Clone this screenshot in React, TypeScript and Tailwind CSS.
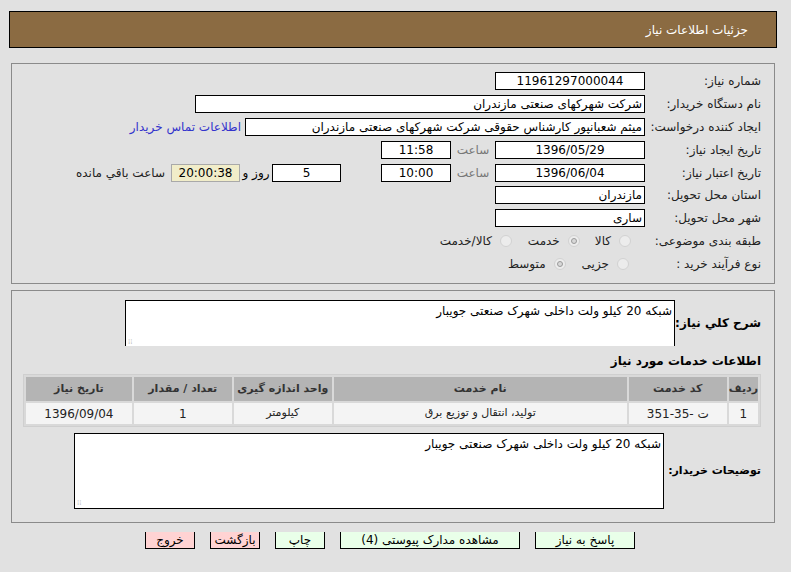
import React from 'react';

const Box = ({ w, children, center = true, bg = 'bg-white' }: { w: string; children?: React.ReactNode; center?: boolean; bg?: string }) => (
  <div className={`${w} h-[18px] border border-black ${bg} flex items-center px-[2px] ${center ? 'justify-center' : 'justify-start'} text-[12px] whitespace-nowrap overflow-hidden`}>
    {children}
  </div>
);

const Radio = ({ checked = false }: { checked?: boolean }) => (
  <span className="w-[12px] h-[12px] rounded-full border border-[#d2d2d2] bg-[#ececec] flex items-center justify-center">
    {checked && <span className="w-[6px] h-[6px] rounded-full border border-[#9a9a9a] bg-[#d8d8d8]" />}
  </span>
);

function Row({ label, children }: { label: string; children?: React.ReactNode }) {
  return (
    <div className="flex items-center h-[22.8px]">
      <div className="w-[116px] shrink-0 whitespace-nowrap text-[12px] text-[#222]">{label}</div>
      <div className="flex items-center">{children}</div>
    </div>
  );
}

export default function App() {
  return (
    <div dir="rtl" className="w-[791px] h-[572px] bg-[#e1e1e1] pt-[11px] pl-[9px] pr-[14px] font-['Tahoma','DejaVu_Sans',sans-serif] text-black">
      <div className="h-[37px] bg-[#8b6b42] border border-black flex items-center pr-[28px]">
        <span className="text-white text-[12px]">جزئیات اطلاعات نیاز</span>
      </div>

      {/* main info */}
      <div className="mt-[15px] mx-[2px] border border-[#8a8a8a] pt-[6px] pb-[8px] pr-[13px]">
        <Row label="شماره نیاز:">
          <Box w="w-[150px]">11961297000044</Box>
        </Row>
        <Row label="نام دستگاه خریدار:">
          <Box w="w-[450px]" center={false}>شرکت شهرکهای صنعتی مازندران</Box>
        </Row>
        <Row label="ایجاد کننده درخواست:">
          <Box w="w-[400px]" center={false}>میثم شعبانپور کارشناس حقوقی شرکت شهرکهای صنعتی مازندران</Box>
          <span className="mr-[4px] text-[12px] text-[#3333cc]">اطلاعات تماس خریدار</span>
        </Row>
        <Row label="تاریخ ایجاد نیاز:">
          <Box w="w-[150px]">1396/05/29</Box>
          <span className="w-[44px] text-center text-[12px] text-[#777]">ساعت</span>
          <Box w="w-[70px]">11:58</Box>
        </Row>
        <Row label="تاریخ اعتبار نیاز:">
          <Box w="w-[150px]">1396/06/04</Box>
          <span className="w-[44px] text-center text-[12px] text-[#777]">ساعت</span>
          <Box w="w-[70px]">10:00</Box>
          <span className="w-[40px]" />
          <Box w="w-[69px]">5</Box>
          <span className="w-[32px] text-center text-[12px]">روز و</span>
          <div className="w-[69px] h-[18px] border border-[#a9a9a9] bg-[#f1edc9] flex items-center justify-center text-[12px]">20:00:38</div>
          <span className="mr-[6px] text-[12px] text-[#222]">ساعت باقي مانده</span>
        </Row>
        <Row label="استان محل تحویل:">
          <Box w="w-[150px]" center={false}>مازندران</Box>
        </Row>
        <Row label="شهر محل تحویل:">
          <Box w="w-[150px]" center={false}>ساری</Box>
        </Row>
        <Row label="طبقه بندی موضوعی:">
          <div className="flex items-center text-[12px] text-[#222]">
            <span className="mr-[14px]"><Radio /></span>
            <span className="mr-[8px]">کالا</span>
            <span className="mr-[15px]"><Radio checked /></span>
            <span className="mr-[8px]">خدمت</span>
            <span className="mr-[16px]"><Radio /></span>
            <span className="mr-[8px]">کالا/خدمت</span>
          </div>
        </Row>
        <Row label="نوع فرآیند خرید :">
          <div className="flex items-center text-[12px] text-[#222]">
            <span className="mr-[16px]"><Radio /></span>
            <span className="mr-[8px]">جزیی</span>
            <span className="mr-[16px]"><Radio checked /></span>
            <span className="mr-[8px]">متوسط</span>
          </div>
        </Row>
      </div>

      {/* description */}
      <div className="mt-[6px] mx-[2px] border border-[#8a8a8a] pt-[9px] pb-[13px] pr-[13px] pl-[12px]">
        <div className="flex items-center pl-[101px]">
          <div className="flex-1 min-w-0 text-[12px] font-bold whitespace-nowrap">شرح کلي نیاز:</div>
          <div className="w-[550px] h-[46px] shrink-0 border-t border-x border-black bg-white text-[12px] px-[2px] pt-[1px] relative">
            شبکه 20 کیلو ولت داخلی شهرک صنعتی جویبار
            <span className="absolute left-[2px] bottom-[0px] text-[7px] text-[#bbb] leading-none">⁞⁞</span>
          </div>
        </div>
        <div className="mt-[6px] text-[12px] font-bold h-[18px] flex items-center">اطلاعات خدمات مورد نیاز</div>
        <table className="mt-[4px] w-[738px] border border-[#cfcfcf] bg-[#d9d9d9] border-separate border-spacing-[2px] text-[11px]">
          <thead>
            <tr className="h-[24px] bg-[#b4b4b4] text-[#333]">
              <th className="w-[26px] font-bold">ردیف</th>
              <th className="w-[98px] font-bold">کد خدمت</th>
              <th className="w-[293px] font-bold">نام خدمت</th>
              <th className="w-[98px] font-bold">واحد اندازه گیری</th>
              <th className="w-[98px] font-bold">تعداد / مقدار</th>
              <th className="font-bold">تاریخ نیاز</th>
            </tr>
          </thead>
          <tbody>
            <tr className="h-[21px] bg-[#f4f4f4] text-center text-[#222]">
              <td className="text-[12px]">1</td>
              <td className="text-[12px]">ت -35-351</td>
              <td>تولید، انتقال و توزیع برق</td>
              <td>کیلومتر</td>
              <td className="text-[12px]">1</td>
              <td className="text-[12px]">1396/09/04</td>
            </tr>
          </tbody>
        </table>
        <div className="flex items-center mt-[6px] pl-[50px]">
          <div className="flex-1 min-w-0 text-[11px] font-bold whitespace-nowrap">توضیحات خریدار:</div>
          <div className="w-[590px] h-[76px] shrink-0 border border-black bg-white text-[12px] px-[2px] pt-[1px] relative">
            شبکه 20 کیلو ولت داخلی شهرک صنعتی جویبار
            <span className="absolute left-[2px] bottom-[1px] text-[7px] text-[#bbb] leading-none">⁞⁞</span>
          </div>
        </div>
      </div>

      {/* buttons */}
      <div className="mt-[9px] flex justify-center gap-[15px] text-[12px] pr-[6px]">
        <div className="w-[100px] h-[17px] bg-[#e9ffe9] border-x border-b border-black flex items-center justify-center">پاسخ به نیاز</div>
        <div className="w-[180px] h-[17px] bg-[#e9ffe9] border-x border-b border-black flex items-center justify-center">مشاهده مدارک پیوستی (4)</div>
        <div className="w-[50px] h-[17px] bg-[#e9ffe9] border-x border-b border-black flex items-center justify-center">چاپ</div>
        <div className="w-[50px] h-[17px] bg-[#ffd3d3] border-x border-b border-black flex items-center justify-center">بازگشت</div>
        <div className="w-[50px] h-[17px] bg-[#ffd3d3] border-x border-b border-black flex items-center justify-center">خروج</div>
      </div>
    </div>
  );
}
